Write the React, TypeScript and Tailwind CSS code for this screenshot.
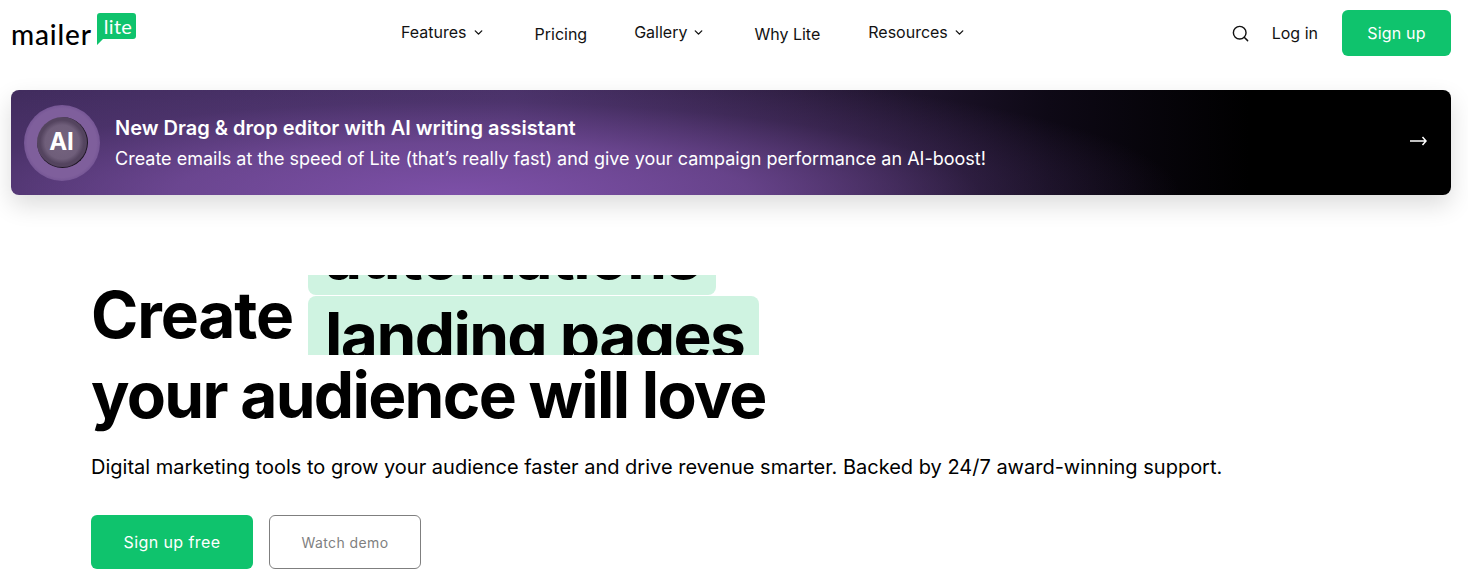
import { ChevronDown, Search } from 'lucide-react';

const inter = "font-['Inter',sans-serif]";

function NavLink({ label, caret, className }: { label: string; caret?: boolean; className?: string }) {
  return (
    <a className={`flex items-center gap-[5px] text-[16px] text-[#121212] ${className ?? ''}`}>
      {label}
      {caret && <ChevronDown size={13} strokeWidth={2.5} />}
    </a>
  );
}

function Logo() {
  return (
    <div className="flex items-start">
      <span className="mt-[15px] font-['Lato',sans-serif] text-[28px] leading-[38px] font-medium tracking-[0.85px] text-black">mailer</span>
      <div className="relative ml-[5px] mt-[13px] h-[32px] w-[39px]">
        <svg width="39" height="32" viewBox="0 0 39 32" className="block">
          <path d="M3 0H36a3 3 0 0 1 3 3V23a3 3 0 0 1-3 3H6L0 32V3a3 3 0 0 1 3-3Z" fill="#0fc36d" />
        </svg>
        <span className="absolute left-[7px] top-[1px] font-['Lato',sans-serif] text-[20px] leading-[24px] font-normal tracking-[0.3px] text-white">lite</span>
      </div>
    </div>
  );
}

function AiBadge() {
  return (
    <div className="flex size-[76px] items-center justify-center rounded-full bg-[radial-gradient(circle,#7f5f9c_0%,#7f5f9c_64%,#694a8c_80%,rgba(80,55,115,0)_100%)]">
      <div className="flex size-[51px] items-center justify-center rounded-full border-r border-b border-[#1d1522] bg-[radial-gradient(circle,#75647f_0%,#6f5e7a_48%,#54445f_62%)] text-[24px] font-bold text-white">
        AI
      </div>
    </div>
  );
}

export default function App() {
  return (
    <div className={`h-[576px] w-[1468px] overflow-hidden bg-white ${inter}`}>
      <header className="flex h-[90px] items-start pl-[11px] pr-[17px]">
        <div className="w-[390px]">
          <Logo />
        </div>
        <nav className="mt-[20px] flex items-start">
          <NavLink label="Features" caret className="mr-[50px]" />
          <NavLink label="Pricing" className="mr-[47px] mt-[2px]" />
          <NavLink label="Gallery" caret className="mr-[49px]" />
          <NavLink label="Why Lite" className="mr-[48px] mt-[2px]" />
          <NavLink label="Resources" caret />
        </nav>
        <div className="ml-auto mt-[10px] flex items-center">
          <Search size={19} strokeWidth={1.8} className="text-[#111]" />
          <a className="ml-[22px] text-[16px] text-[#121212]">Log in</a>
          <a className="ml-[24px] flex h-[46px] w-[109px] items-center justify-center rounded-[6px] bg-[#0fc36d] text-[16px] tracking-[0.2px] text-white">Sign up</a>
        </div>
      </header>

      <div className="mx-[11px] flex h-[105px] w-[1440px] items-center rounded-[8px] bg-[radial-gradient(ellipse_720px_130px_at_450px_100%,#7d50a8_0%,rgba(120,78,160,0.75)_40%,rgba(95,62,130,0.3)_72%,rgba(80,55,110,0)_100%),linear-gradient(90deg,#412c5e_0%,#452f63_35%,#2b1c3d_55%,#0e0916_72%,#000_86%)] pl-[13px] pr-[24px] shadow-[0_10px_24px_rgba(0,0,0,0.14)]">
        <AiBadge />
        <div className="ml-[15px] pt-[1px] text-white">
          <p className="text-[20px] leading-[28px] font-semibold">New Drag &amp; drop editor with AI writing assistant</p>
          <p className="mt-[3px] text-[18px] leading-[28px]">Create emails at the speed of Lite (that’s really fast) and give your campaign performance an AI-boost!</p>
        </div>
        <svg width="17" height="10" viewBox="0 0 17 10" fill="none" stroke="#fff" strokeWidth="1.5" className="ml-auto mb-[3px]">
          <path d="M0 5H16M12.5 1l3.5 4-3.5 4" />
        </svg>
      </div>

      <main className="pl-[91px]">
        <div className="mt-[80px] flex items-center">
          <h1 className="text-[64px] leading-[80px] font-bold tracking-[-1.1px] text-black">Create</h1>
          <div className="ml-[15px] h-[80px] overflow-hidden">
            <div className="-mt-[59px] flex flex-col items-start gap-px">
              <div className="h-[79px] rounded-[8px] bg-[#cff3e1] pl-[17px] pr-[16px] text-[64px] leading-[80px] font-bold tracking-[-1.4px] text-black">automations</div>
              <div className="h-[80px] rounded-[8px] bg-[#cff3e1] pl-[17px] pr-[15px] text-[64px] leading-[80px] font-bold tracking-[-1.6px] text-black">landing pages</div>
            </div>
          </div>
        </div>
        <h1 className="text-[64px] leading-[80px] font-bold tracking-[-1.69px] text-black">your audience will love</h1>
        <p className="mt-[18px] text-[20px] leading-[28px] text-black">Digital marketing tools to grow your audience faster and drive revenue smarter. Backed by 24/7 award-winning support.</p>
        <div className="mt-[34px] flex gap-[16px]">
          <a className="flex h-[54px] w-[162px] items-center justify-center rounded-[6px] bg-[#0fc36d] text-[16px] tracking-[0.4px] text-white">Sign up free</a>
          <a className="flex h-[54px] w-[152px] items-center justify-center rounded-[6px] border border-[#7f7f7f] text-[14px] tracking-[0.4px] text-[#7f7f7f]">Watch demo</a>
        </div>
      </main>
    </div>
  );
}
